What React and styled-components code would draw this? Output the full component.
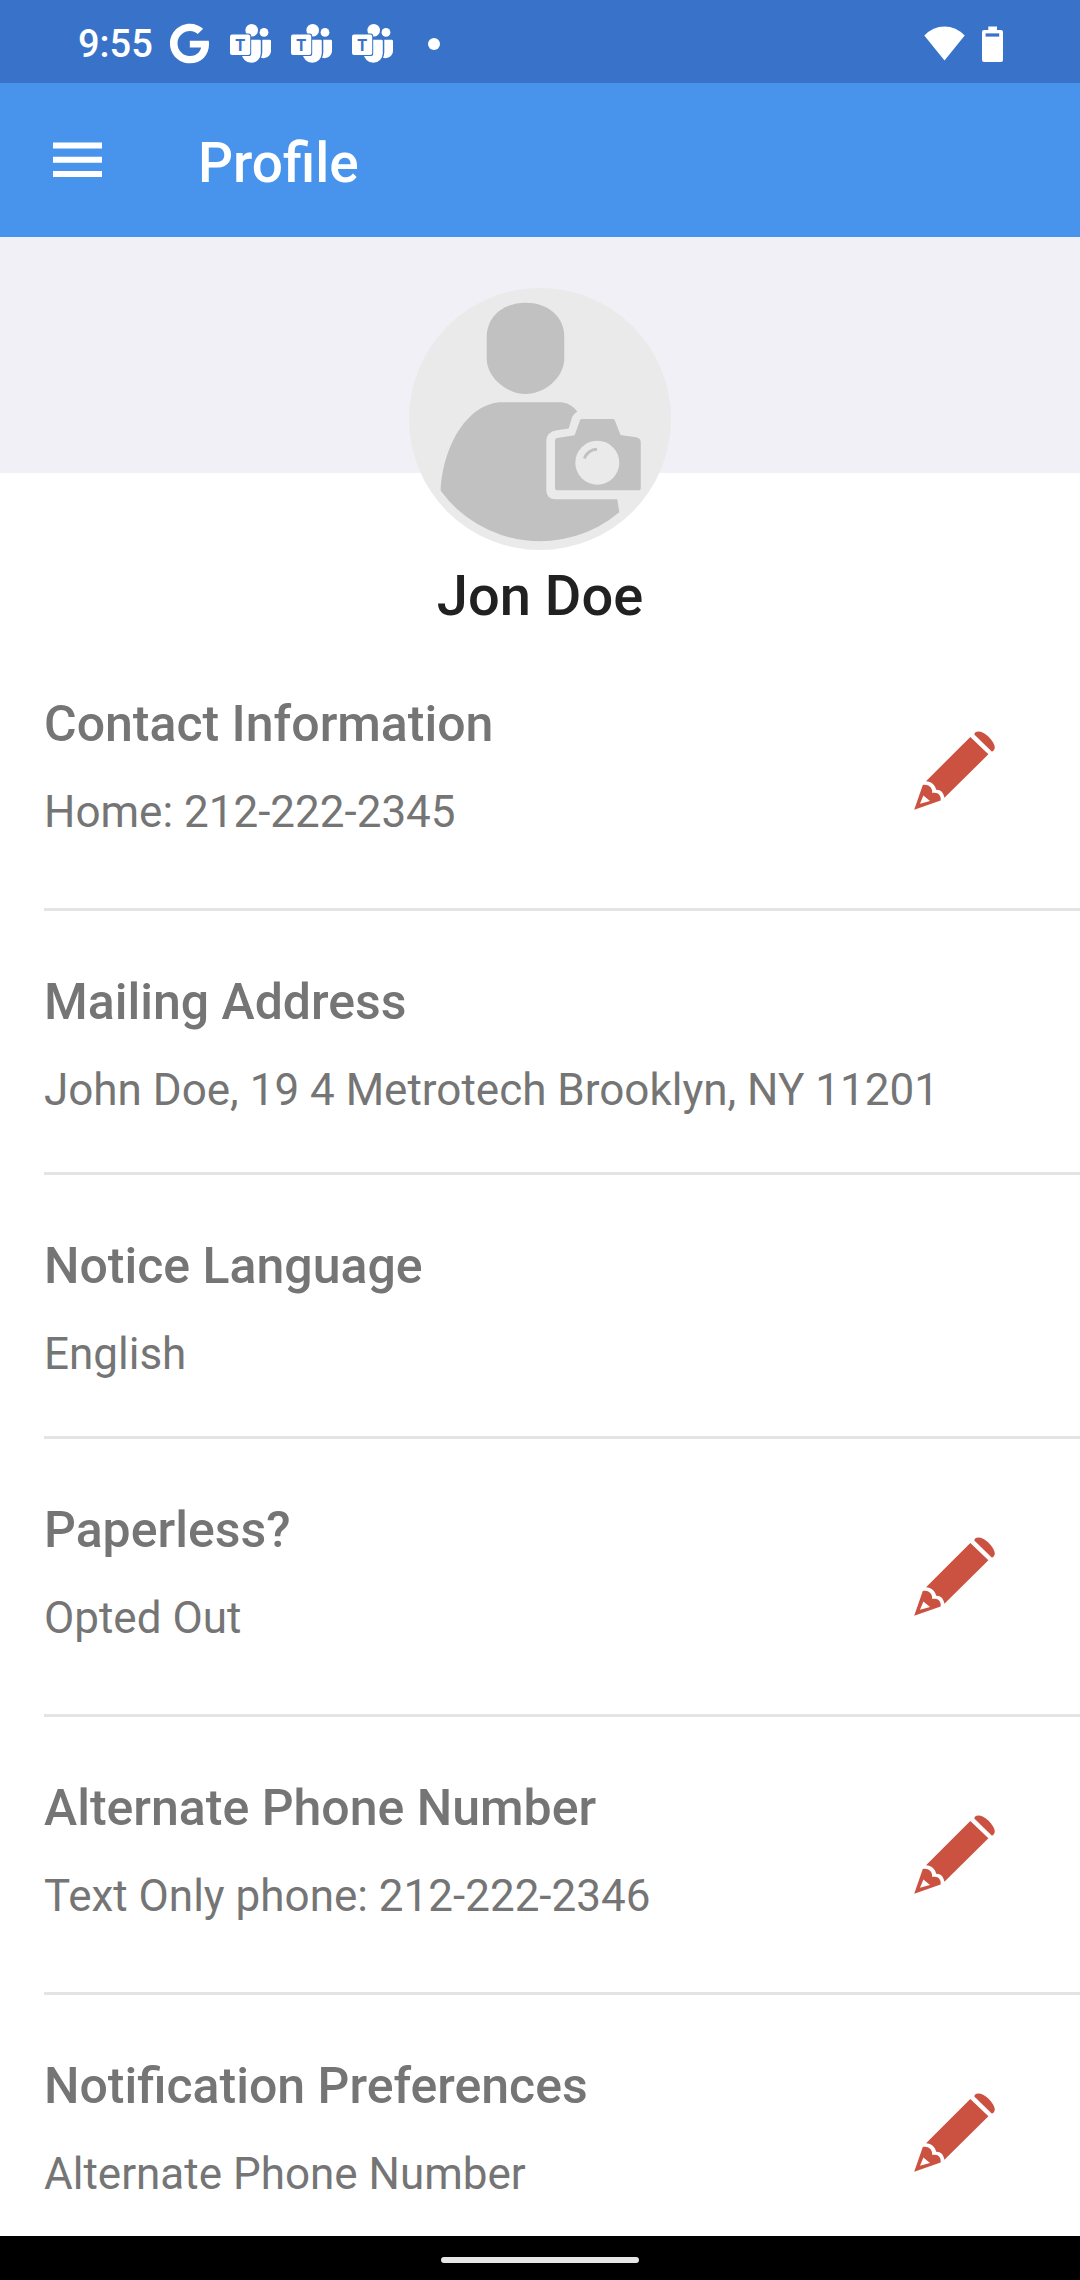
import React from "react";
import styled, { createGlobalStyle } from "styled-components";
import { FaGoogle } from "react-icons/fa";

const GlobalStyle = createGlobalStyle`
    * {
        box-sizing: border-box;
    }

    body {
        margin: 0;
        background-color: #fff;
        font-family: Roboto, "Liberation Sans", sans-serif;
    }
`;

const Screen = styled.div`
    display: flex;
    flex-direction: column;
    height: 100vh;
`;

const StatusBar = styled.div`
    display: flex;
    align-items: center;
    justify-content: space-between;
    flex: none;
    height: 83px;
    padding: 4px 77px 0 78px;
    background-color: #3873c9;
    color: #fff;
`;

const StatusGroup = styled.div`
    display: flex;
    align-items: center;
    gap: ${props => props.$gap}px;

    svg {
        display: block;
    }
`;

const Clock = styled.time`
    font-size: 38px;
    font-weight: 500;
    line-height: 44px;
`;

const MoreDot = styled.span`
    width: 12px;
    height: 12px;
    margin-left: 15px;
    border-radius: 50%;
    background-color: #fff;
`;

const AppBar = styled.header`
    display: flex;
    align-items: center;
    flex: none;
    gap: 96px;
    height: 154px;
    padding: 0 53px;
    background-color: #4894ed;
    color: #fff;
`;

const MenuButton = styled.button`
    display: block;
    padding: 0;
    border: none;
    background: none;
    color: inherit;
    cursor: pointer;

    svg {
        display: block;
    }
`;

const Title = styled.h1`
    margin: 0;
    padding-top: 6px;
    font-size: 55px;
    font-weight: 500;
    line-height: 64px;
`;

const Content = styled.main`
    flex: 1;
    min-height: 0;
    overflow-y: auto;
    scrollbar-width: none;
`;

const ProfileHeader = styled.section`
    display: flex;
    flex-direction: column;
    align-items: center;
    padding: 51px 0 5px;
    background: linear-gradient(#f0f0f6, #f0f0f6) top / 100% 236px no-repeat;
`;

const AvatarButton = styled.button`
    display: block;
    padding: 0;
    border: none;
    border-radius: 50%;
    background: none;
    cursor: pointer;

    svg {
        display: block;
    }
`;

const Name = styled.h2`
    margin: 14px 0 0;
    color: #212121;
    font-size: 56px;
    font-weight: 500;
    line-height: 64px;
`;

const List = styled.ul`
    margin: 0;
    padding: 0 0 0 44px;
    list-style: none;
`;

const Row = styled.li`
    display: flex;
    align-items: center;
    justify-content: space-between;
    padding-right: 84px;
    color: #757575;

    & + & {
        border-top: 3px solid #e4e4e4;
    }
`;

const RowText = styled.div`
    display: grid;
    gap: 32px;
    padding: 61px 0 ${props => (props.$editable ? 70 : 56)}px;
`;

const Label = styled.h3`
    margin: 0;
    font-size: 50px;
    font-weight: 500;
    line-height: 60px;
`;

const Value = styled.p`
    margin: 0;
    font-size: 44px;
    line-height: 52px;
`;

const EditButton = styled.button`
    flex: none;
    padding: 0;
    border: none;
    background: none;
    color: #cb5140;
    cursor: pointer;

    svg {
        display: block;
    }
`;

const NavBar = styled.footer`
    display: flex;
    align-items: center;
    justify-content: center;
    flex: none;
    height: 44px;
    padding-top: 4px;
    background-color: #000;
`;

const Handle = styled.span`
    width: 198px;
    height: 6px;
    border-radius: 3px;
    background-color: #e6e6e6;
`;

const sections = [
    { label: "Contact Information", value: "Home: 212-222-2345", editable: true },
    { label: "Mailing Address", value: "John Doe, 19 4 Metrotech Brooklyn, NY 11201", editable: false },
    { label: "Notice Language", value: "English", editable: false },
    { label: "Paperless?", value: "Opted Out", editable: true },
    { label: "Alternate Phone Number", value: "Text Only phone: 212-222-2346", editable: true },
    { label: "Notification Preferences", value: "Alternate Phone Number", editable: true },
];

function TeamsIcon() {
    return (
        <svg width="41" height="40" viewBox="0 0 41 40" fill="#fff" aria-hidden="true">
            <circle cx="21.7" cy="6.3" r="6.3" />
            <circle cx="34" cy="8.4" r="4.4" />
            <path d="M32.3 15.7H39.6Q41 15.7 41 17.1V26.5A7.5 7.5 0 0 1 31 33.7Q32.3 31 32.3 28Z" />
            <path d="M11.7 15.7H29.4Q30.8 15.7 30.8 17.1V29.3A9.5 9.5 0 0 1 11.7 29.3Z" />
            <rect x="-1" y="9.6" width="22.2" height="22.4" rx="2.6" fill="#3873c9" />
            <rect x="0" y="10.6" width="20.2" height="20.4" rx="2" />
            <text x="10.3" y="26.6" textAnchor="middle" fontSize="16" fontWeight="700" fill="#3873c9">T</text>
        </svg>
    );
}

function WifiIcon() {
    return (
        <svg width="41" height="36" viewBox="0 0 41 36" fill="#fff" aria-hidden="true">
            <path d="M0.3 9.5Q9 0.5 20.5 0.5T40.7 9.5L20.5 34.5Z" />
        </svg>
    );
}

function BatteryIcon() {
    return (
        <svg width="21" height="36" viewBox="0 0 21 36" aria-hidden="true">
            <path d="M6.3 0.5H15V4H19Q21 4 21 6V34Q21 36 19 36H2Q0 36 0 34V6Q0 4 2 4H6.3Z" fill="#fff" />
            <rect x="3.6" y="7.4" width="13.6" height="3.2" fill="#3873c9" />
        </svg>
    );
}

function MenuIcon() {
    return (
        <svg width="49" height="36" viewBox="0 0 49 36" fill="currentColor" aria-hidden="true">
            <path d="M0 0.5H49V6.5H0ZM0 14.8H49V20.8H0ZM0 29.1H49V35.1H0Z" />
        </svg>
    );
}

function PencilIcon() {
    return (
        <svg width="84" height="84" viewBox="0 0 84 84" fill="currentColor" aria-hidden="true">
            <path d="M62.8 3.8C66 1.2 71 2.6 76 7.2C81.5 12.4 84.5 18.6 81.7 21.3L80 22.8L62.3 5.5Z" />
            <path d="M58.3 8L76.4 25.3L32.4 68.8C31.6 63.6 28.6 60.6 24.2 60.8C23 55.6 19.4 52.6 14 52.2Z" />
            <path fillRule="evenodd" d="M10.8 56C16 55 20.6 58 20.2 64C25.6 62.4 29.6 66.4 28.6 71.6L2.2 80.8ZM11.4 66.6L8 74.8L18 72Z" />
        </svg>
    );
}

// person silhouette with a camera badge cut into the shoulder
function AvatarIcon() {
    return (
        <svg width="262" height="262" viewBox="0 0 262 262" aria-hidden="true">
            <circle cx="131" cy="131" r="131" fill="#eaeaea" />
            <g fill="#c1c1c1">
                <path d="M77.7 49C77.7 28 95 14.7 116.7 14.7S155.3 28 155.3 49V70C155.3 91 134 106 116.7 106S77.7 91 77.7 70Z" />
                <path d="M31.7 202.7C34 156 60 114.3 93.3 114.3H151.7C158 114.5 164 118 168.3 123.7C164 126 163 129 162 133L159.6 140.5L148 142.3Q137.3 144 137.3 153V202Q137.3 211.3 147 211.3H208.3L210.3 224.3A123 123 0 0 1 31.7 202.7Z" />
                <path d="M146 152.5Q146 150.3 148.3 150L165.6 147.2L171 132.3Q171.5 131 173 131H204Q205.3 131 205.8 132.3L211.5 147L227 149.3Q231.8 150.2 231.8 154.5V200.5Q231.8 202.3 230 202.3H148Q146 202.3 146 200.3Z" />
            </g>
            <circle cx="188.3" cy="174.7" r="22" fill="#eaeaea" />
            <path d="M175.3 170.5Q179 161.5 188 161.2" fill="none" stroke="#c1c1c1" strokeWidth="3" />
        </svg>
    );
}

function App() {
    return (
        <Screen>
            <GlobalStyle />
            <StatusBar>
                <StatusGroup $gap={16}>
                    <Clock>9:55</Clock>
                    <StatusGroup $gap={20}>
                        <FaGoogle size={41} aria-hidden="true" />
                        <TeamsIcon />
                        <TeamsIcon />
                        <TeamsIcon />
                        <MoreDot />
                    </StatusGroup>
                </StatusGroup>
                <StatusGroup $gap={17}>
                    <WifiIcon />
                    <BatteryIcon />
                </StatusGroup>
            </StatusBar>
            <AppBar>
                <MenuButton type="button" aria-label="Open menu">
                    <MenuIcon />
                </MenuButton>
                <Title>Profile</Title>
            </AppBar>
            <Content>
                <ProfileHeader>
                    <AvatarButton type="button" aria-label="Change profile photo">
                        <AvatarIcon />
                    </AvatarButton>
                    <Name>Jon Doe</Name>
                </ProfileHeader>
                <List>
                    {sections.map(({ label, value, editable }) => (
                        <Row key={label}>
                            <RowText $editable={editable}>
                                <Label>{label}</Label>
                                <Value>{value}</Value>
                            </RowText>
                            {editable && (
                                <EditButton type="button" aria-label={"Edit " + label}>
                                    <PencilIcon />
                                </EditButton>
                            )}
                        </Row>
                    ))}
                </List>
            </Content>
            <NavBar>
                <Handle />
            </NavBar>
        </Screen>
    );
}

export default App;
